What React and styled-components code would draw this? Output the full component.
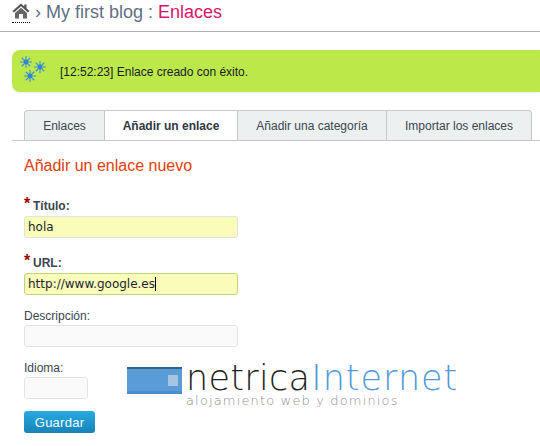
import React from 'react';
import styled, { createGlobalStyle } from 'styled-components';

const GlobalStyle = createGlobalStyle`
  html, body {
    margin: 0;
    padding: 0;
    background: #fff;
    font-family: "Liberation Sans", Arial, sans-serif;
    overflow: hidden;
  }
`;

const Page = styled.div`
  position: relative;
  width: 540px;
  height: 446px;
  overflow: hidden;
`;
const Header = styled.div`
  display: flex;
  align-items: flex-start;
  height: 31px;
  padding-left: 12px;
  border-bottom: 1px solid #b4b4b4;
  box-sizing: content-box;
`;
const HomeLink = styled.a`
  display: block;
  width: 18px;
  height: 23px;
  padding-top: 3px;
  box-sizing: border-box;
  border-bottom: 1px dotted #000;
  line-height: 0;
`;
const Crumbs = styled.div`
  margin-left: 5px;
  font-size: 18px;
  line-height: 24px;
  color: #5f6f83;
  white-space: pre;
`;
const Current = styled.span`
  color: #d9156b;
`;
const Message = styled.div`
  display: flex;
  align-items: center;
  height: 42px;
  margin: 18px 0 0 12px;
  padding-left: 8px;
  background: #bde84a;
  border-radius: 8px 0 0 8px;
  box-shadow: 0 1px 2px rgba(0, 0, 0, 0.08);
  font-size: 12px;
  color: #15202b;
`;
const MessageText = styled.span`
  margin-left: 8px;
  padding-top: 1px;
`;
const TabBar = styled.div`
  display: flex;
  height: 30px;
  margin: 18px 0 0 12px;
  padding-left: 12px;
  border-bottom: 1px solid #c8c8c8;
`;
const Tab = styled.a`
  display: flex;
  align-items: center;
  justify-content: center;
  box-sizing: border-box;
  width: ${({ $width }) => $width}px;
  height: 30px;
  border: 1px solid #c8c8c8;
  border-left: ${({ $first }) => ($first ? '1px solid #c8c8c8' : 'none')};
  border-bottom: none;
  border-radius: ${({ $first, $last }) =>
    $first ? '4px 0 0 0' : $last ? '0 4px 0 0' : '0'};
  background: ${({ $active }) => ($active ? '#fff' : '#ecf0f1')};
  color: ${({ $active }) => ($active ? '#2f3640' : '#3c4650')};
  font-size: 12px;
  font-weight: ${({ $active }) => ($active ? 700 : 400)};
`;
const Content = styled.div`
  padding: 16px 0 0 24px;
`;
const Title = styled.h2`
  margin: 0 0 24px;
  font-size: 16px;
  line-height: 18px;
  font-weight: 400;
  color: #e2400b;
`;
const Field = styled.div`
  display: flex;
  flex-direction: column;
  align-items: flex-start;
  margin-bottom: ${({ $gap }) => $gap}px;
`;
const Label = styled.label`
  display: flex;
  align-items: center;
  height: 14px;
  margin-bottom: ${({ $required }) => ($required ? 3 : 2)}px;
  font-size: 12px;
  font-weight: ${({ $required }) => ($required ? 700 : 400)};
  color: #3a4450;
`;
const Star = styled.span`
  width: 9px;
  margin-top: -4px;
  font-size: 16px;
  font-weight: 700;
  color: #a00000;
`;
const Input = styled.div`
  box-sizing: border-box;
  display: flex;
  align-items: center;
  width: ${({ $width }) => $width || 214}px;
  height: 22px;
  padding-left: 3px;
  border: 1px solid ${({ $focus }) => ($focus ? '#bcd678' : '#e2e2e2')};
  border-radius: 3px;
  background: ${({ $filled }) => ($filled ? '#f9fdb9' : '#fafafa')};
  font-family: "DejaVu Sans", sans-serif;
  font-size: 12px;
  color: #1c2630;
`;
const Caret = styled.span`
  width: 1px;
  height: 14px;
  background: #000;
`;
const SaveButton = styled.button`
  display: block;
  width: 71px;
  height: 22px;
  padding: 0;
  border: none;
  border-radius: 3px;
  background: linear-gradient(#29a9e1, #1783b8);
  color: #f4fbff;
  font-family: "Liberation Sans", Arial, sans-serif;
  font-size: 13px;
  letter-spacing: 0.25px;
`;
const Watermark = styled.div`
  position: absolute;
  left: 127px;
  top: 362px;
  display: flex;
  align-items: flex-start;
`;
const LogoBar = styled.div`
  position: relative;
  width: 55px;
  height: 27px;
  margin-top: 5px;
  box-sizing: border-box;
  background: #5a9cd5;
  border-top: 2px solid #34618e;
  border-bottom: 3px solid #4a8dc8;
`;
const LogoSquare = styled.span`
  position: absolute;
  left: 41px;
  top: 6px;
  width: 10px;
  height: 11px;
  background: #a5c5e2;
`;
const LogoText = styled.div`
  margin-left: 4px;
`;
const LogoName = styled.div`
  font-family: "DejaVu Sans", sans-serif;
  font-weight: 200;
  font-size: 35px;
  line-height: 32px;
  letter-spacing: 0.3px;
  color: #1e1e1e;
  white-space: nowrap;
`;
const LogoAccent = styled.span`
  margin-left: 1px;
  letter-spacing: 1px;
  color: #4f9bd8;
`;
const LogoTagline = styled.div`
  font-family: "DejaVu Sans", sans-serif;
  font-weight: 200;
  font-size: 13px;
  line-height: 14px;
  letter-spacing: 1.15px;
  color: #8f8f8f;
  white-space: nowrap;
`;

function HomeIcon() {
  return (
    <svg width="18" height="16" viewBox="0 0 18 16">
      <path d="M9 0.5 L0.5 8 L2 9.5 L9 3.3 L16 9.5 L17.5 8 L14.5 5.3 V1.5 H12.3 V3.4 Z" fill="#555" />
      <path d="M3 10 L9 4.8 L15 10 V15.5 H11 V11 H7 V15.5 H3 Z" fill="#666" />
    </svg>
  );
}

function Stars() {
  const star = (cx, cy, r) => {
    const rays = [0, 45, 90, 135].map((a) => {
      const dx = Math.cos((a * Math.PI) / 180) * r;
      const dy = Math.sin((a * Math.PI) / 180) * r;
      return `M${cx - dx} ${cy - dy}L${cx + dx} ${cy + dy}`;
    });
    return (
      <g key={`${cx}-${cy}`}>
        <path d={rays.join('')} stroke="#3a90d8" strokeWidth="1.1" />
        <circle cx={cx} cy={cy} r={r * 0.4} fill="#2f86d2" />
      </g>
    );
  };
  return (
    <svg width="32" height="34" viewBox="0 0 32 34">
      {star(6, 8, 6)}
      {star(20, 13, 6)}
      {star(10, 22, 6)}
    </svg>
  );
}

function App() {
  return (
    <Page>
      <GlobalStyle />
      <Header>
        <HomeLink>
          <HomeIcon />
        </HomeLink>
        <Crumbs>
          › My first blog : <Current>Enlaces</Current>
        </Crumbs>
      </Header>
      <Message>
        <Stars />
        <MessageText>[12:52:23] Enlace creado con éxito.</MessageText>
      </Message>
      <TabBar>
        <Tab $first $width={81}>Enlaces</Tab>
        <Tab $active $width={133}>Añadir un enlace</Tab>
        <Tab $width={149}>Añadir una categoría</Tab>
        <Tab $last $width={145}>Importar los enlaces</Tab>
      </TabBar>
      <Content>
        <Title>Añadir un enlace nuevo</Title>
        <Field $gap={18}>
          <Label $required>
            <Star>*</Star>Título:
          </Label>
          <Input $filled>hola</Input>
        </Field>
        <Field $gap={14}>
          <Label $required>
            <Star>*</Star>URL:
          </Label>
          <Input $filled $focus>
            http://www.google.es<Caret />
          </Input>
        </Field>
        <Field $gap={14}>
          <Label>Descripción:</Label>
          <Input />
        </Field>
        <Field $gap={12}>
          <Label>Idioma:</Label>
          <Input $width={64} />
        </Field>
        <SaveButton>Guardar</SaveButton>
      </Content>
      <Watermark>
        <LogoBar>
          <LogoSquare />
        </LogoBar>
        <LogoText>
          <LogoName>
            netrica<LogoAccent>Internet</LogoAccent>
          </LogoName>
          <LogoTagline>alojamiento web y dominios</LogoTagline>
        </LogoText>
      </Watermark>
    </Page>
  );
}

export default App;
